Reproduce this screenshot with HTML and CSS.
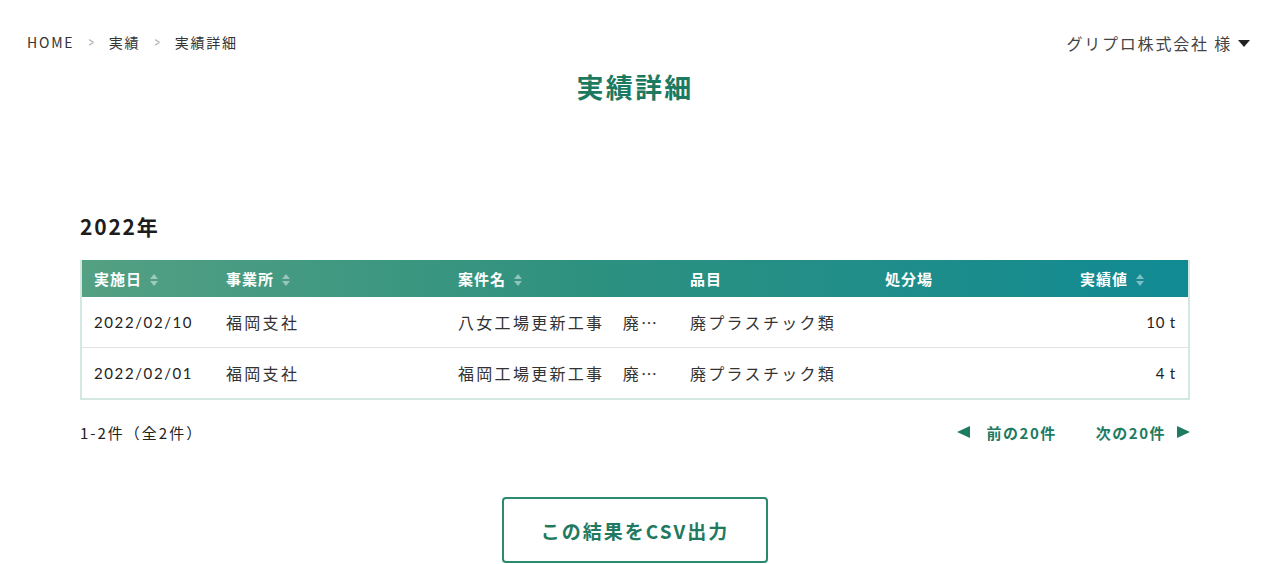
FILE: index.html
```html
<!DOCTYPE html>
<html lang="ja">
<head>
<meta charset="utf-8">
<title>実績詳細</title>
<link rel="stylesheet" href="styles.css">
</head>
<body>
<header class="topbar">
  <nav class="crumbs">
    <span class="home">HOME</span><span class="sep">&gt;</span><span>実績</span><span class="sep">&gt;</span><span>実績詳細</span>
  </nav>
  <div class="user">グリプロ株式会社 様<span class="caret"></span></div>
</header>
<h1 class="title">実績詳細</h1>
<main class="content">
  <h2 class="year">2022年</h2>
  <table class="grid">
    <thead>
      <tr>
        <th class="c1">実施日<span class="sort"></span></th>
        <th class="c2">事業所<span class="sort"></span></th>
        <th class="c3">案件名<span class="sort"></span></th>
        <th class="c4">品目</th>
        <th class="c5">処分場</th>
        <th class="c6">実績値<span class="sort"></span></th>
      </tr>
    </thead>
    <tbody>
      <tr>
        <td class="num">2022/02/10</td>
        <td>福岡支社</td>
        <td>八女工場更新工事　廃…</td>
        <td>廃プラスチック類</td>
        <td></td>
        <td class="val num">10 t</td>
      </tr>
      <tr>
        <td class="num">2022/02/01</td>
        <td>福岡支社</td>
        <td>福岡工場更新工事　廃…</td>
        <td>廃プラスチック類</td>
        <td></td>
        <td class="val num">4 t</td>
      </tr>
    </tbody>
  </table>
  <div class="pager">
    <span class="count">1-2件（全2件）</span>
    <div class="links">
      <a class="prev"><span class="tri tri-l"></span>前の20件</a>
      <a class="next">次の20件<span class="tri tri-r"></span></a>
    </div>
  </div>
  <div class="actions">
    <button class="csv">この結果をCSV出力</button>
  </div>
</main>
</body>
</html>
```
FILE: styles.css
```css
html, body {
  margin: 0;
  padding: 0;
  background: #fff;
}
body {
  font-family: "Noto Sans CJK JP", "Noto Sans", sans-serif;
  color: #222;
  width: 1270px;
  height: 564px;
  overflow: hidden;
}
.topbar {
  display: flex;
  justify-content: space-between;
  align-items: center;
  padding: 31px 20px 0 27px;
  height: 21px;
}
.crumbs {
  font-size: 14px;
  color: #333;
  display: flex;
  gap: 13px;
  align-items: center;
  letter-spacing: 1.8px;
}
.crumbs .sep {
  color: #aaa;
  font-size: 15px;
  transform: scaleX(0.6);
  letter-spacing: 0;
}
.user {
  font-size: 16px;
  color: #444;
  letter-spacing: 1.8px;
  display: flex;
  align-items: center;
  margin-top: 3px;
}
.caret {
  display: inline-block;
  width: 0;
  height: 0;
  border-left: 6.5px solid transparent;
  border-right: 6.5px solid transparent;
  border-top: 7px solid #222;
  margin-left: 6px;
}
.title {
  margin: 18px 0 0;
  text-align: center;
  font-size: 27px;
  font-weight: 700;
  color: #1c7a60;
  line-height: 34px;
  letter-spacing: 2.3px;
}
.content {
  padding: 0 80px;
}
.year {
  margin: 108px 0 0;
  font-size: 21px;
  font-weight: 700;
  line-height: 28px;
  color: #1d1d1d;
  letter-spacing: 1.8px;
}
.grid {
  margin-top: 20px;
  width: 1110px;
  border-collapse: collapse;
  table-layout: fixed;
  border: 2px solid #d3e8e3;
  border-top: none;
}
.grid thead tr {
  background: linear-gradient(90deg, #54a083 0%, #2e917f 45%, #118a94 100%);
}
.grid th {
  height: 37px;
  padding: 0 0 0 12px;
  text-align: left;
  color: #fff;
  font-size: 15px;
  font-weight: 700;
  letter-spacing: 1px;
  white-space: nowrap;
}
.c1 { width: 120px; }
.c2 { width: 220px; }
.c3 { width: 220px; }
.c4 { width: 183px; }
.c5 { width: 183px; }
.sort {
  display: inline-block;
  position: relative;
  width: 8px;
  height: 12px;
  vertical-align: -1px;
  margin-left: 8px;
}
.sort::before, .sort::after {
  content: "";
  position: absolute;
  left: 0;
  border-left: 4px solid transparent;
  border-right: 4px solid transparent;
}
.sort::before {
  top: 0;
  border-bottom: 5px solid rgba(255,255,255,0.45);
}
.sort::after {
  bottom: 0;
  border-top: 5px solid rgba(255,255,255,0.45);
}
.grid td {
  height: 50px;
  padding: 0 0 0 12px;
  font-size: 16px;
  color: #333;
  letter-spacing: 2.3px;
  white-space: nowrap;
  overflow: hidden;
  border-bottom: 1px solid #e3e3e3;
}
.grid tbody tr:last-child td {
  border-bottom: none;
}
.grid td.num {
  font-family: "Lato", "Noto Sans", sans-serif;
  font-size: 15px;
  letter-spacing: 1.6px;
  color: #222;
}
.grid td.val {
  text-align: right;
  padding-right: 12px;
  letter-spacing: 0.8px;
}
.pager {
  display: flex;
  justify-content: space-between;
  align-items: center;
  margin-top: 19px;
  height: 26px;
}
.count {
  font-size: 15px;
  color: #222;
  letter-spacing: 2px;
}
.links {
  display: flex;
  gap: 39px;
  font-size: 15px;
  font-weight: 700;
  color: #1d7b62;
  letter-spacing: 1.5px;
}
.links a {
  display: flex;
  align-items: center;
}
.tri {
  display: inline-block;
  width: 0;
  height: 0;
  border-top: 6.5px solid transparent;
  border-bottom: 6.5px solid transparent;
}
.tri-l { border-right: 13px solid #1d7b62; margin-right: 17px; }
.tri-r { border-left: 13px solid #1d7b62; margin-left: 11px; }
.actions {
  display: flex;
  justify-content: center;
  margin-top: 52px;
}
.csv {
  width: 266px;
  height: 66px;
  background: #fff;
  border: 2px solid #2b8a6e;
  border-radius: 4px;
  font-family: "Noto Sans CJK JP", sans-serif;
  font-size: 19px;
  font-weight: 700;
  color: #1f7a60;
  letter-spacing: 2px;
}
```
